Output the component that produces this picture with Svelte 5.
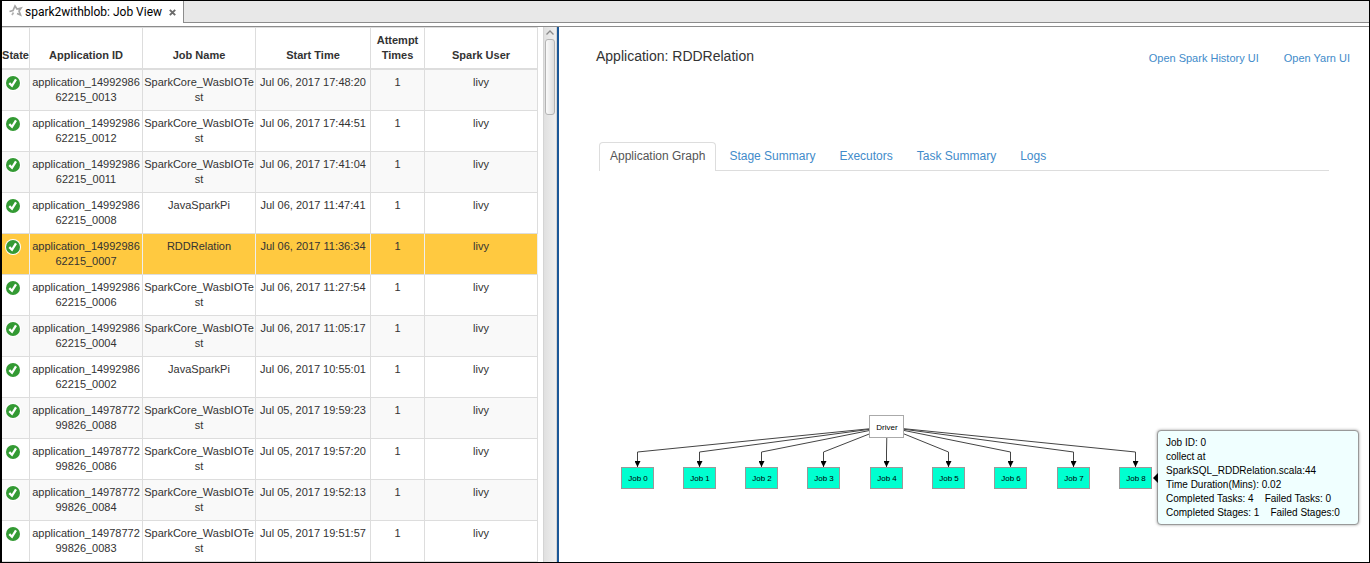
<script>
  const jobs = [
    ['application_1499298662215_0013', 'SparkCore_WasbIOTest', 'Jul 06, 2017 17:48:20'],
    ['application_1499298662215_0012', 'SparkCore_WasbIOTest', 'Jul 06, 2017 17:44:51'],
    ['application_1499298662215_0011', 'SparkCore_WasbIOTest', 'Jul 06, 2017 17:41:04'],
    ['application_1499298662215_0008', 'JavaSparkPi', 'Jul 06, 2017 11:47:41'],
    ['application_1499298662215_0007', 'RDDRelation', 'Jul 06, 2017 11:36:34'],
    ['application_1499298662215_0006', 'SparkCore_WasbIOTest', 'Jul 06, 2017 11:27:54'],
    ['application_1499298662215_0004', 'SparkCore_WasbIOTest', 'Jul 06, 2017 11:05:17'],
    ['application_1499298662215_0002', 'JavaSparkPi', 'Jul 06, 2017 10:55:01'],
    ['application_1497877299826_0088', 'SparkCore_WasbIOTest', 'Jul 05, 2017 19:59:23'],
    ['application_1497877299826_0086', 'SparkCore_WasbIOTest', 'Jul 05, 2017 19:57:20'],
    ['application_1497877299826_0084', 'SparkCore_WasbIOTest', 'Jul 05, 2017 19:52:13'],
    ['application_1497877299826_0083', 'SparkCore_WasbIOTest', 'Jul 05, 2017 19:51:57'],
  ];
  let selected = $state(4);

  const tabs = ['Application Graph', 'Stage Summary', 'Executors', 'Task Summary', 'Logs'];
  let activeTab = $state(0);

  const driver = { x: 288, y: 256 };
  const nodes = Array.from({ length: 9 }, (_, i) => {
    const x = 39 + Math.floor(i * 62.3);
    return { x, label: `Job ${i}` };
  });
</script>

<div class="window">
  <header class="titlebar">
    <div class="view-tab">
      <svg class="star" width="14" height="14" viewBox="0 0 14 14" aria-hidden="true">
        <path d="M.5 7.500 4 6.500 6 2l2 3 4-1-2 3 1.500 4L8 9.500" fill="none" stroke="#a5a5a5" stroke-width="1.700" />
        <path d="M3 11l1.500-2.500" fill="none" stroke="#b0b0b0" stroke-width="1.700" />
      </svg>
      <span>spark2withblob: Job View</span>
      <button class="close" aria-label="Close">
        <svg width="7" height="7" viewBox="0 0 7 7"><path d="M.8.8l5.400 5.400M6.200.8.8 6.200" stroke="#6a6a6a" stroke-width="1.900" /></svg>
      </button>
    </div>
    <div class="strip"></div>
  </header>

  <main class="panes">
    <section class="list">
      <table>
        <colgroup>
          <col class="c-state" /><col class="c-id" /><col class="c-name" />
          <col class="c-time" /><col class="c-try" /><col />
        </colgroup>
        <thead>
          <tr>
            <th>State</th><th>Application ID</th><th>Job Name</th>
            <th>Start Time</th><th>Attempt Times</th><th>Spark User</th>
          </tr>
        </thead>
        <tbody>
          {#each jobs as [id, name, time], i}
            <tr class:selected={i === selected} onclick={() => (selected = i)}>
              <td class="state">
                <svg width="16" height="16" viewBox="0 0 16 16" role="img" aria-label="Succeeded">
                  <circle cx="8" cy="8" r="8" fill="#fff" />
                  <circle cx="8" cy="8" r="7" fill="#339a33" />
                  <path d="M4.300 8.200 7 10.800 11 4.300" fill="none" stroke="#fff" stroke-width="2.300" />
                </svg>
              </td>
              <td>{id}</td><td>{name}</td><td>{time}</td><td>1</td><td>livy</td>
            </tr>
          {/each}
        </tbody>
      </table>
      <div class="scrollbar">
        <svg width="14" height="12" viewBox="0 0 14 12" aria-hidden="true">
          <path d="M3.500 7.500 7 4l3.500 3.500" fill="none" stroke="#8a8a8a" stroke-width="1.300" />
        </svg>
        <div class="thumb"></div>
      </div>
    </section>

    <section class="detail">
      <div class="heading">
        <h1>Application: RDDRelation</h1>
        <nav class="links">
          <a href="#history">Open Spark History UI</a>
          <a href="#yarn">Open Yarn UI</a>
        </nav>
      </div>
      <div class="tabs" role="tablist">
        {#each tabs as tab, i}
          <button role="tab" aria-selected={i === activeTab} class:active={i === activeTab} onclick={() => (activeTab = i)}>{tab}</button>
        {/each}
      </div>
      <div class="graph">
        <svg width="560" height="340" viewBox="0 0 560 340">
          <defs>
            <marker id="arrow" viewBox="0 0 6 6" refX="6" refY="3" markerWidth="6" markerHeight="6" markerUnits="userSpaceOnUse" orient="auto">
              <path d="M0 0 6 3 0 6z" />
            </marker>
          </defs>
          {#each nodes as n}
            <path d="M{driver.x} {driver.y}L{n.x - 0.5} 281V296" class="edge" marker-end="url(#arrow)" />
          {/each}
          <rect x="270.500" y="244.500" width="34" height="22" class="driver" />
          <text x={driver.x} y="259">Driver</text>
          {#each nodes as n}
            <rect x={n.x - 16.5} y="296.500" width="32" height="21" class="job" />
            <text x={n.x} y="310">{n.label}</text>
          {/each}
        </svg>
        <div class="tooltip" role="tooltip">
          <div>Job ID: 0</div>
          <div>collect at</div>
          <div>SparkSQL_RDDRelation.scala:44</div>
          <div>Time Duration(Mins): 0.02</div>
          <div class="pair"><span>Completed Tasks: 4</span><span>Failed Tasks: 0</span></div>
          <div class="pair"><span>Completed Stages: 1</span><span>Failed Stages:0</span></div>
        </div>
      </div>
    </section>
  </main>
</div>

<style>
  :global(body) { background: #fff; }
  .window {
    box-sizing: border-box;
    min-height: 100vh;
    display: flex;
    flex-direction: column;
    border: 1px solid #000;
    border-left-width: 2px;
    font: 11px/15px "Liberation Sans", Arial, sans-serif;
    color: #333;
    background: #fff;
  }
  button { font: inherit; border: 0; background: none; padding: 0; cursor: pointer; }
  .titlebar { display: flex; height: 25px; border-bottom: 1px solid #8c8c8c; }
  .view-tab {
    display: flex;
    align-items: center;
    height: 22px;
    padding: 0 7px;
    border-right: 1px solid #8c8c8c;
    font-family: Roboto, "Open Sans", sans-serif;
    font-size: 12px;
    color: #000;
  }
  .star { align-self: flex-start; margin: 3px 2px 0 0; }
  .close { display: flex; margin-left: 7px; }
  .strip { flex: 1; height: 21px; background: #e8e8e8; border-bottom: 1px solid #8c8c8c; }

  .panes { flex: 1; display: grid; grid-template-columns: 557fr 810fr; }
  .list { display: flex; gap: 5px; border-right: 2px solid #1b5797; }
  table { flex: 1; min-width: 0; table-layout: fixed; border-collapse: separate; border-spacing: 0; align-self: flex-start; }
  .c-state { width: 28px; }
  .c-id, .c-name { width: 113px; }
  .c-time { width: 115px; }
  .c-try { width: 54px; }
  th, td {
    padding: 5px 0;
    border-right: 1px solid #ddd;
    border-bottom: 1px solid #ddd;
    text-align: center;
    vertical-align: top;
    word-break: break-all;
  }
  th { vertical-align: bottom; border-top: 1px solid #ddd; border-bottom-width: 2px; word-break: normal; }
  td { height: 30px; }
  tbody tr:nth-child(odd) { background: #f9f9f9; }
  tbody tr.selected { background: #ffc940; }
  .selected td { border-right-color: #eee; }
  .state { text-align: left; padding-left: 3px; }
  .state svg { display: block; }
  .scrollbar { width: 12px; border: solid #d4d4d4; border-width: 0 1px; background: linear-gradient(90deg, #e0e0e0, #efefef); }
  .scrollbar svg { display: block; margin-left: -1px; }
  .thumb { height: 74px; margin: 0 1px; border: 1px solid #b4b4b4; border-radius: 3px; background: linear-gradient(90deg, #fafafa, #dedede); }

  .detail { display: flex; flex-direction: column; min-width: 0; padding: 0 40px; }
  .heading { display: flex; justify-content: space-between; height: 95px; padding-top: 20px; margin: 0 -21px 0 -3px; }
  h1 { margin: 0; font-size: 14px; line-height: 18px; font-weight: 400; }
  .links { display: flex; gap: 25px; padding-top: 4px; }
  a { color: #428bca; text-decoration: none; }
  .tabs { display: flex; gap: 2px; border-bottom: 1px solid #ddd; }
  .tabs button {
    height: 29px;
    padding: 0 10px 2px;
    margin-bottom: -1px;
    border: 1px solid transparent;
    border-bottom: 0;
    border-radius: 4px 4px 0 0;
    font-size: 12px;
    color: #428bca;
  }
  .tabs .active { color: #555; border-color: #ddd; background: #fff; }
  .graph { position: relative; }
  .graph > svg { display: block; font-size: 8px; text-anchor: middle; }
  .edge { fill: none; stroke: #444; }
  .driver { fill: #fff; stroke: #aaa; }
  .job { fill: #00ffd0; stroke: #999; }
  text { fill: #000; }
  .tooltip {
    position: absolute;
    left: 558px;
    top: 259px;
    box-sizing: border-box;
    width: 202px;
    padding: 5px 8px 4px;
    border: 1px solid #999;
    border-radius: 4px;
    background: #f0ffff;
    box-shadow: 0 0 3px #999;
    color: #000;
    font-size: 10px;
    line-height: 14px;
  }
  .tooltip::before {
    content: "";
    position: absolute;
    left: -5px;
    top: 42px;
    border: solid transparent;
    border-width: 5px 5px 5px 0;
    border-right-color: #000;
  }
  .pair { display: flex; gap: 11px; }
</style>
